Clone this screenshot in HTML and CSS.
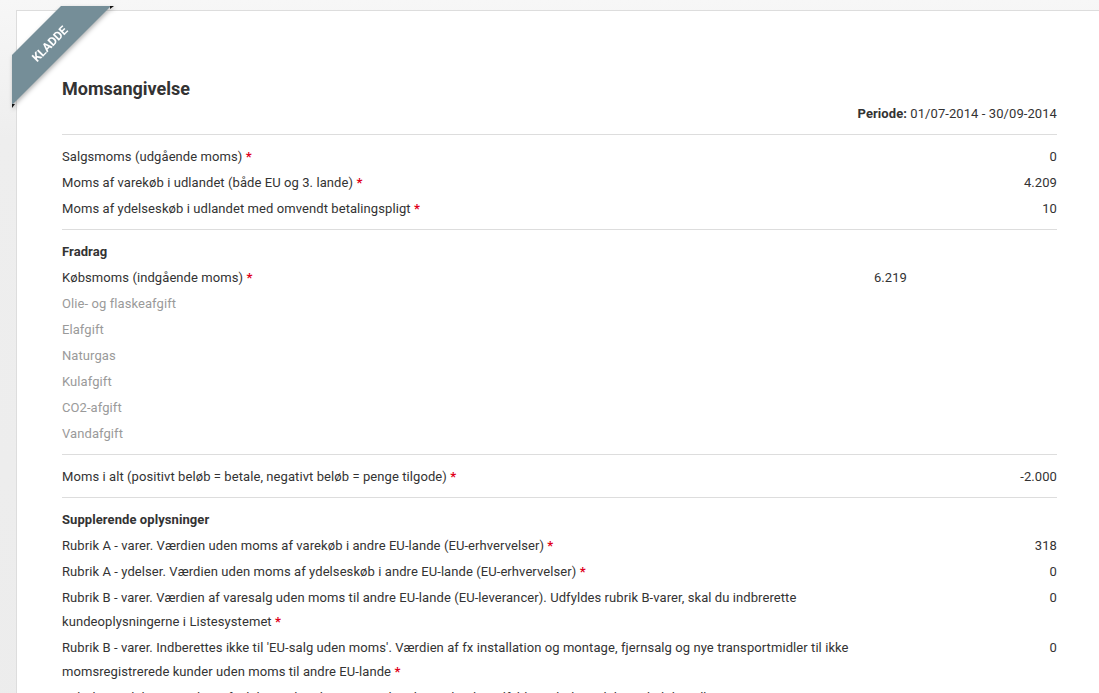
FILE: index.html
```html
<!DOCTYPE html>
<html lang="da">
<head>
<meta charset="utf-8">
<title>Momsangivelse</title>
<link rel="stylesheet" href="styles.css">
</head>
<body>
<div class="card">
  <svg class="ribbon" width="99" height="99" viewBox="0 0 99 99">
    <polygon class="ribbon-band" points="0,49 49,0 99,0 0,99"/>
    <polygon class="ribbon-fold" points="0,98 3,98 0,102"/>
    <polygon class="ribbon-fold" points="98,0 98,3 102,0"/>
    <text class="ribbon-text" x="38" y="38" transform="rotate(-45 38 38)">KLADDE</text>
  </svg>

  <h1 class="title">Momsangivelse</h1>
  <div class="period"><b>Periode:</b> 01/07-2014 - 30/09-2014</div>
  <hr class="sep">

  <div class="row"><div class="label">Salgsmoms (udgående moms) <span class="req">*</span></div><div class="val">0</div></div>
  <div class="row"><div class="label">Moms af varekøb i udlandet (både EU og 3. lande) <span class="req">*</span></div><div class="val">4.209</div></div>
  <div class="row"><div class="label">Moms af ydelseskøb i udlandet med omvendt betalingspligt <span class="req">*</span></div><div class="val">10</div></div>
  <hr class="sep">

  <div class="row head"><div class="label">Fradrag</div></div>
  <div class="row split"><div class="label">Købsmoms (indgående moms) <span class="req">*</span></div><div class="val">6.219</div><div class="val"></div></div>
  <div class="row split muted"><div class="label">Olie- og flaskeafgift</div><div class="val"></div><div class="val"></div></div>
  <div class="row split muted"><div class="label">Elafgift</div><div class="val"></div><div class="val"></div></div>
  <div class="row split muted"><div class="label">Naturgas</div><div class="val"></div><div class="val"></div></div>
  <div class="row split muted"><div class="label">Kulafgift</div><div class="val"></div><div class="val"></div></div>
  <div class="row split muted"><div class="label">CO2-afgift</div><div class="val"></div><div class="val"></div></div>
  <div class="row split muted"><div class="label">Vandafgift</div><div class="val"></div><div class="val"></div></div>
  <hr class="sep">

  <div class="row"><div class="label">Moms i alt (positivt beløb = betale, negativt beløb = penge tilgode) <span class="req">*</span></div><div class="val">-2.000</div></div>
  <hr class="sep">

  <div class="row head"><div class="label">Supplerende oplysninger</div></div>
  <div class="row wide"><div class="label">Rubrik A - varer. Værdien uden moms af varekøb i andre EU-lande (EU-erhvervelser) <span class="req">*</span></div><div class="val">318</div></div>
  <div class="row wide"><div class="label">Rubrik A - ydelser. Værdien uden moms af ydelseskøb i andre EU-lande (EU-erhvervelser) <span class="req">*</span></div><div class="val">0</div></div>
  <div class="row wide"><div class="label">Rubrik B - varer. Værdien af varesalg uden moms til andre EU-lande (EU-leverancer). Udfyldes rubrik B-varer, skal du indbrerette kundeoplysningerne i Listesystemet <span class="req">*</span></div><div class="val">0</div></div>
  <div class="row wide"><div class="label">Rubrik B - varer. Indberettes ikke til 'EU-salg uden moms'. Værdien af fx installation og montage, fjernsalg og nye transportmidler til ikke momsregistrerede kunder uden moms til andre EU-lande <span class="req">*</span></div><div class="val">0</div></div>
  <div class="row wide"><div class="label">Rubrik B - ydelser. Værdien af ydelsessalg uden moms til andre EU-lande. Udfyldes rubrik B-ydelser, skal du indberette kundeoplysningerne i Listesystemet <span class="req">*</span></div><div class="val">0</div></div>
  <div class="row wide"><div class="label">Rubrik C - Værdien af andre varer og ydelser leveret uden afgift her i landet, i andre EU-lande og i lande uden for EU <span class="req">*</span></div><div class="val">0</div></div>
</div>
</body>
</html>
```

FILE: styles.css
```css
html {
  overflow: hidden;
}

body {
  margin: 0;
  padding: 10px 0 0 16px;
  background: linear-gradient(to bottom, #f7f7f7 0, #eeeeee 140px, #ececec 100%);
  font-family: Roboto, "Liberation Sans", Arial, sans-serif;
  font-size: 13px;
  letter-spacing: 0.08px;
  color: #333333;
  min-height: 100vh;
  box-sizing: border-box;
}

.card {
  position: relative;
  background: #ffffff;
  border: 1px solid #dddddd;
  border-right: none;
  padding: 67px 42px 40px 45px;
}

.ribbon {
  position: absolute;
  top: -5px;
  left: -5px;
  overflow: visible;
  filter: drop-shadow(1px 2px 2px rgba(0, 0, 0, 0.28));
}

.ribbon-band {
  fill: #758e98;
}

.ribbon-fold {
  fill: #111111;
}

.ribbon-text {
  fill: #ffffff;
  font-family: Roboto, "Liberation Sans", Arial, sans-serif;
  font-size: 12px;
  font-weight: 700;
  letter-spacing: 0;
  text-anchor: middle;
  dominant-baseline: central;
}

.title {
  margin: 0;
  font-size: 18px;
  line-height: 22px;
  font-weight: 700;
  letter-spacing: 0;
  color: #333333;
}

.period {
  text-align: right;
  line-height: 25px;
  padding-top: 1px;
}

.period b {
  font-weight: 700;
}

.sep {
  border: 0;
  border-top: 1px solid #dddddd;
  margin: 8px 0;
  height: 0;
}

.row {
  display: grid;
  grid-template-columns: 1fr 150px;
  line-height: 24px;
  padding: 2px 0 0;
}

.row.wide {
  grid-template-columns: 1fr 200px;
}

.row.split {
  grid-template-columns: 1fr 150px 150px;
}

.row.head .label {
  font-weight: 700;
}

.row.muted {
  color: #9a9a9a;
}

.val {
  text-align: right;
}

.req {
  color: #e0001a;
  font-weight: 700;
}
```
